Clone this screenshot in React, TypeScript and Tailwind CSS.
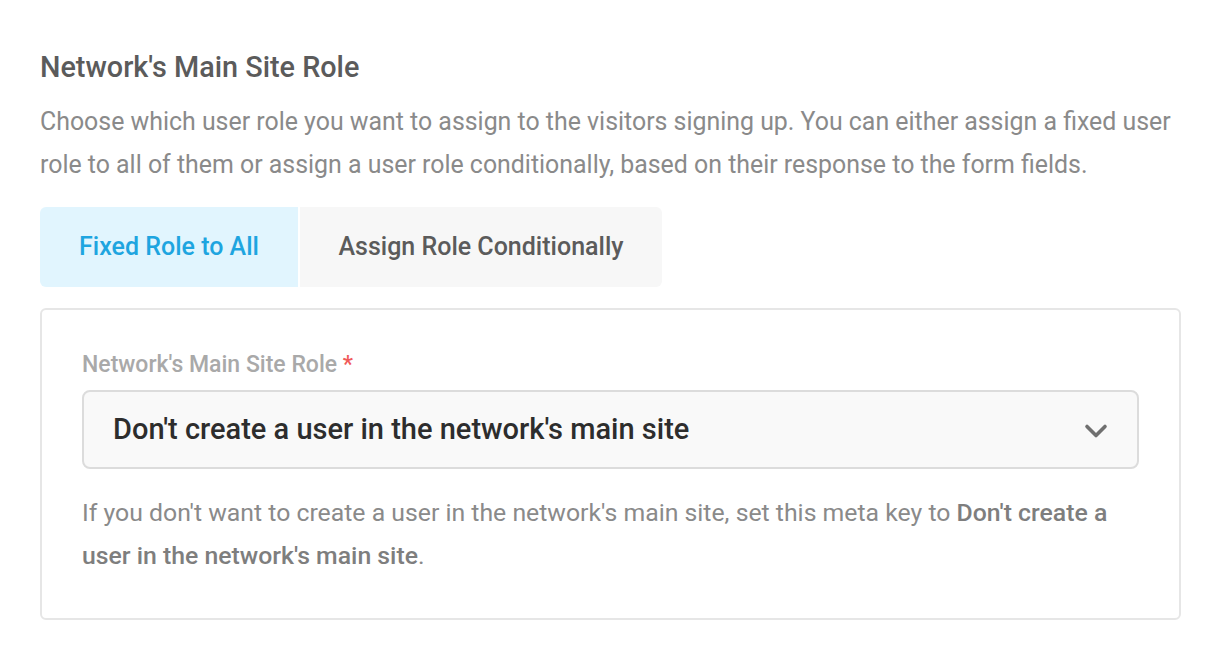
import React, { useState } from 'react';
import { ChevronDown } from 'lucide-react';

const tabs = ['Fixed Role to All', 'Assign Role Conditionally'];

const App: React.FC = () => {
    const [active, setActive] = useState(0);

    return (
        <div className="min-h-screen bg-white font-['Roboto',sans-serif] px-10 pt-[50px]">
            <h2 className="text-[28.8px] leading-[34px] font-medium text-[#5b5b5b]">Network's Main Site Role</h2>
            <p className="mt-[16px] text-[24.9px] leading-[43px] text-[#8a8a8a] max-w-[1140px]">
                Choose which user role you want to assign to the visitors signing up. You can either assign a fixed user role to all of them or assign a user role conditionally, based on their response to the form fields.
            </p>

            <div className="mt-[21px] flex gap-[2px] w-fit rounded-md overflow-hidden">
                {tabs.map((t, i) => (
                    <button
                        key={t}
                        onClick={() => setActive(i)}
                        className={
                            i === active
                                ? 'h-[80px] w-[258px] bg-[#e1f5fe] text-[#1ea5e0] text-[25px] font-medium'
                                : 'h-[80px] w-[362px] bg-[#f7f7f7] text-[#5b5b5b] text-[25px] font-medium'
                        }
                    >
                        {t}
                    </button>
                ))}
            </div>

            <div className="mt-[21px] w-[1141px] rounded-md border-2 border-[#e6e6e6] px-[40px] pt-[40px] pb-[41px]">
                <label className="block text-[23px] leading-[30px] font-medium text-[#a9a9a9]">
                    Network's Main Site Role <span className="text-[#f05a5a]">*</span>
                </label>
                <div className="mt-[10px] h-[79px] flex items-center justify-between rounded-lg border-2 border-[#dcdcdc] bg-[#f9f9f9] pl-[29px] pr-[23px]">
                    <span className="text-[29px] font-medium text-[#2d2d2d]">Don't create a user in the network's main site</span>
                    <ChevronDown size={36} strokeWidth={2.4} className="text-[#707070] mt-[2px]" />
                </div>
                <p className="mt-[22px] text-[24.8px] leading-[43px] text-[#8a8a8a]">
                    If you don't want to create a user in the network's main site, set this meta key to{' '}
                    <strong className="font-medium text-[#7e7e7e]">Don't create a user in the network's main site</strong>.
                </p>
            </div>
        </div>
    );
};

export default App;
